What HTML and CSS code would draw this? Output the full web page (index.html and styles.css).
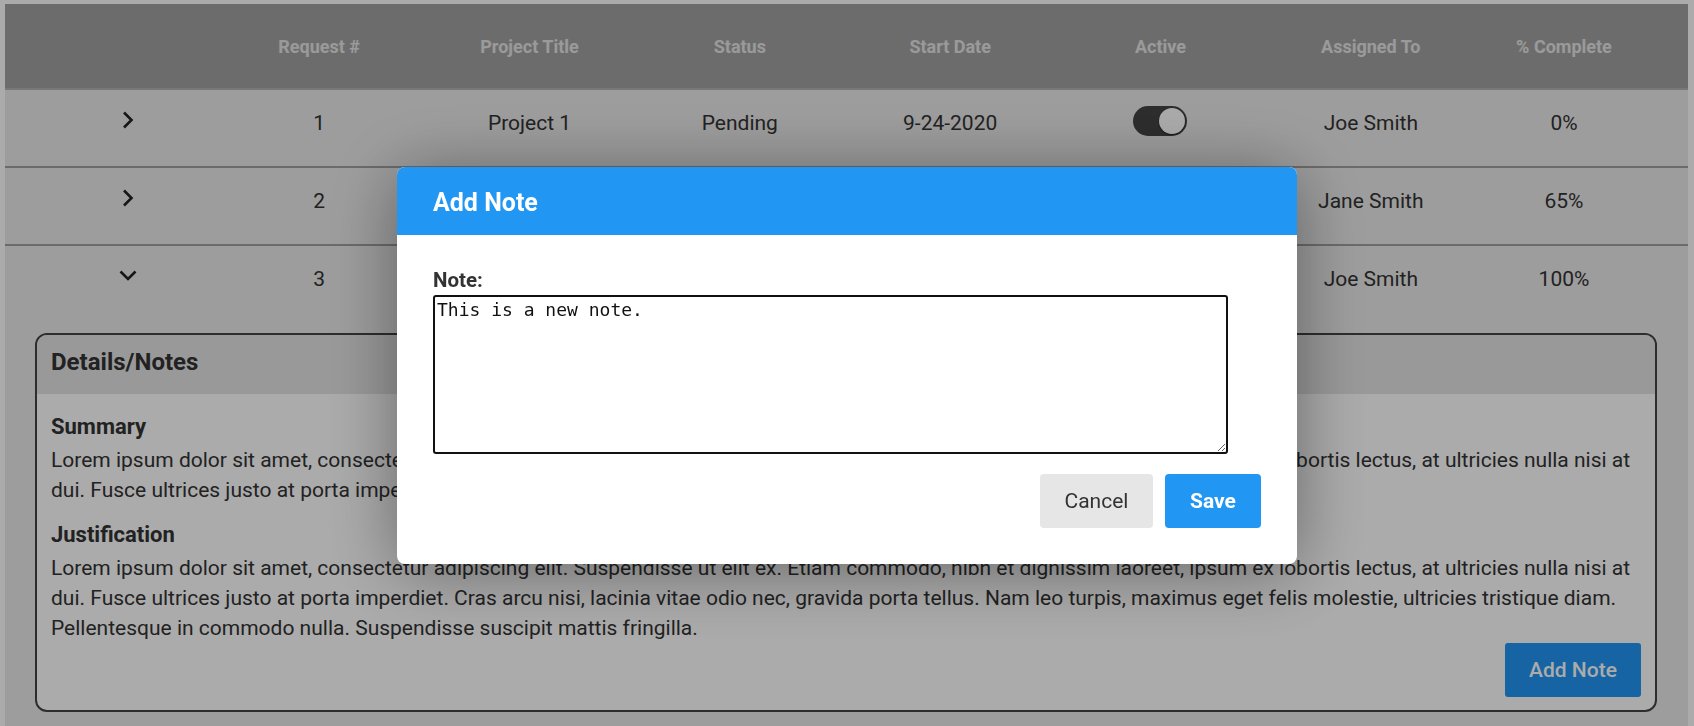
FILE: index.html
```html
<!DOCTYPE html>
<html lang="en">
<head>
<meta charset="utf-8">
<title>Requests</title>
<link rel="stylesheet" href="styles.css">
</head>
<body>
<div class="page">
  <div class="table">
    <div class="grid thead">
      <div class="th"></div>
      <div class="th">Request #</div>
      <div class="th">Project Title</div>
      <div class="th">Status</div>
      <div class="th">Start Date</div>
      <div class="th">Active</div>
      <div class="th">Assigned To</div>
      <div class="th">% Complete</div>
    </div>

    <div class="row">
      <div class="grid cells">
        <div class="td chev-cell"><svg class="chev-right" width="12" height="18" viewBox="0 0 12 18"><path d="M2 1.5 L9.5 9 L2 16.5" fill="none" stroke="#222" stroke-width="2.6"/></svg></div>
        <div class="td">1</div>
        <div class="td">Project 1</div>
        <div class="td">Pending</div>
        <div class="td">9-24-2020</div>
        <div class="td"><span class="switch"><span class="knob"></span></span></div>
        <div class="td">Joe Smith</div>
        <div class="td">0%</div>
      </div>
      <div class="detail-collapsed"></div>
    </div>

    <div class="row">
      <div class="grid cells">
        <div class="td chev-cell"><svg class="chev-right" width="12" height="18" viewBox="0 0 12 18"><path d="M2 1.5 L9.5 9 L2 16.5" fill="none" stroke="#222" stroke-width="2.6"/></svg></div>
        <div class="td">2</div>
        <div class="td">Project 2</div>
        <div class="td">In Progress</div>
        <div class="td">9-28-2020</div>
        <div class="td"><span class="switch"><span class="knob"></span></span></div>
        <div class="td">Jane Smith</div>
        <div class="td">65%</div>
      </div>
      <div class="detail-collapsed"></div>
    </div>

    <div class="row">
      <div class="grid cells">
        <div class="td chev-cell"><svg class="chev-down" width="18" height="11" viewBox="0 0 18 11"><path d="M1.5 1.5 L9 9 L16.5 1.5" fill="none" stroke="#222" stroke-width="2.6"/></svg></div>
        <div class="td">3</div>
        <div class="td">Project 3</div>
        <div class="td">Complete</div>
        <div class="td">10-1-2020</div>
        <div class="td"><span class="switch"><span class="knob"></span></span></div>
        <div class="td">Joe Smith</div>
        <div class="td">100%</div>
      </div>
      <div class="detail-open">
        <div class="card">
          <div class="card-head">Details/Notes</div>
          <div class="card-body">
            <h4 class="sub">Summary</h4>
            <p class="para">Lorem ipsum dolor sit amet, consectetur adipiscing elit. Suspendisse ut elit ex. Etiam commodo, nibh et dignissim laoreet, ipsum ex lobortis lectus, at ultricies nulla nisi at dui. Fusce ultrices justo at porta imperdiet. Cras arcu nisi, lacinia vitae odio nec, gravida porta tellus.</p>
            <h4 class="sub">Justification</h4>
            <p class="para">Lorem ipsum dolor sit amet, consectetur adipiscing elit. Suspendisse ut elit ex. Etiam commodo, nibh et dignissim laoreet, ipsum ex lobortis lectus, at ultricies nulla nisi at dui. Fusce ultrices justo at porta imperdiet. Cras arcu nisi, lacinia vitae odio nec, gravida porta tellus. Nam leo turpis, maximus eget felis molestie, ultricies tristique diam. Pellentesque in commodo nulla. Suspendisse suscipit mattis fringilla.</p>
            <div class="card-actions">
              <button class="btn btn-primary btn-add">Add Note</button>
            </div>
          </div>
        </div>
      </div>
    </div>
  </div>
</div>

<div class="overlay">
  <div class="modal">
    <div class="modal-head">Add Note</div>
    <div class="modal-body">
      <label class="label" for="note">Note:</label>
      <textarea id="note" class="note">This is a new note.</textarea>
      <div class="modal-actions">
        <button class="btn btn-cancel">Cancel</button>
        <button class="btn btn-primary btn-save">Save</button>
      </div>
    </div>
  </div>
</div>
</body>
</html>
```

FILE: styles.css
```css
* { box-sizing: border-box; }

html, body {
  margin: 0;
  padding: 0;
  background: #ffffff;
  font-family: Roboto, "Liberation Sans", Arial, sans-serif;
  color: #333;
  overflow: hidden;
}

.page {
  margin: 4px 6px 0 5px;
}

.table {
  background: #ebebeb;
}

.grid {
  display: grid;
  grid-template-columns: 173px repeat(6, 210.33px) 1fr;
  padding: 0 36px;
}

.thead {
  height: 86px;
  background: #a2a2a2;
  border-bottom: 2px solid #b4b4b4;
}

.th {
  display: flex;
  align-items: center;
  justify-content: center;
  font-size: 18px;
  font-weight: 700;
  color: #e6e6e6;
}

.row {
  border-bottom: 2px solid #a0a0a0;
}

.cells {
  height: 66px;
}

.td {
  display: flex;
  align-items: center;
  justify-content: center;
  font-size: 21px;
  color: #333;
}

.chev-cell {
  padding-bottom: 7px;
}

.chev-right, .chev-down {
  display: block;
}

.detail-collapsed {
  height: 10px;
}

.detail-open {
  padding: 21px 31px 20px 30px;
}

.switch {
  position: relative;
  display: inline-block;
  width: 54px;
  height: 30px;
  border-radius: 15px;
  background: #444;
  margin-bottom: 4px;
}

.knob {
  position: absolute;
  top: 2px;
  right: 2px;
  width: 26px;
  height: 26px;
  border-radius: 50%;
  background: #fff;
  box-shadow: 0 1px 2px rgba(0,0,0,0.5);
}

.card {
  border: 2px solid #444;
  border-radius: 12px;
  overflow: hidden;
  background: #fff;
}

.card-head {
  background: #e5e5e5;
  padding: 13px 14px 17px;
  font-size: 24px;
  line-height: 29px;
  font-weight: 700;
  color: #333;
}

.card-body {
  padding: 15px 14px 13px;
}

.sub {
  margin: 0;
  font-size: 22px;
  line-height: 36px;
  font-weight: 700;
  color: #333;
}

.para {
  margin: 0 0 12px;
  font-size: 21px;
  line-height: 30px;
  color: #333;
}

.para:last-of-type {
  margin-bottom: 0;
}

.card-actions {
  display: flex;
  justify-content: flex-end;
}

.btn {
  height: 54px;
  border: none;
  border-radius: 4px;
  padding: 0 25px;
  font-family: Roboto, "Liberation Sans", Arial, sans-serif;
  font-size: 21px;
  cursor: pointer;
}

.btn-primary {
  background: #2196f3;
  color: #fff;
}

.btn-add {
  width: 136px;
  padding: 0;
  font-weight: 500;
  border-radius: 3px;
}

.overlay {
  position: fixed;
  inset: 0;
  background: rgba(0, 0, 0, 0.33);
  display: flex;
  align-items: center;
  justify-content: center;
  padding-top: 5px;
}

.modal {
  width: 900px;
  background: #fff;
  border-radius: 8px;
  overflow: hidden;
  box-shadow: 0 6px 70px rgba(0, 0, 0, 0.4);
}

.modal-head {
  height: 68px;
  background: #2196f3;
  color: #fff;
  font-size: 25px;
  font-weight: 700;
  display: flex;
  align-items: center;
  padding: 3px 36px 0;
}

.modal-body {
  padding: 33px 36px 36px;
}

.label {
  display: block;
  font-size: 20.5px;
  line-height: 24px;
  font-weight: 700;
  color: #333;
  margin-bottom: 3px;
}

.note {
  display: block;
  width: 795px;
  height: 159px;
  border: 2px solid #111;
  border-radius: 3px;
  padding: 2px;
  margin: 0;
  font-family: "DejaVu Sans Mono", "Liberation Mono", monospace;
  font-size: 18px;
  color: #111;
  background: #fff;
  outline: none;
}

.modal-actions {
  display: flex;
  justify-content: flex-end;
  gap: 12px;
  margin-top: 20px;
}

.btn-cancel {
  background: #e6e6e6;
  color: #333;
  width: 113px;
  padding: 0;
}

.btn-save {
  width: 96px;
  padding: 0;
  font-weight: 700;
}
```
